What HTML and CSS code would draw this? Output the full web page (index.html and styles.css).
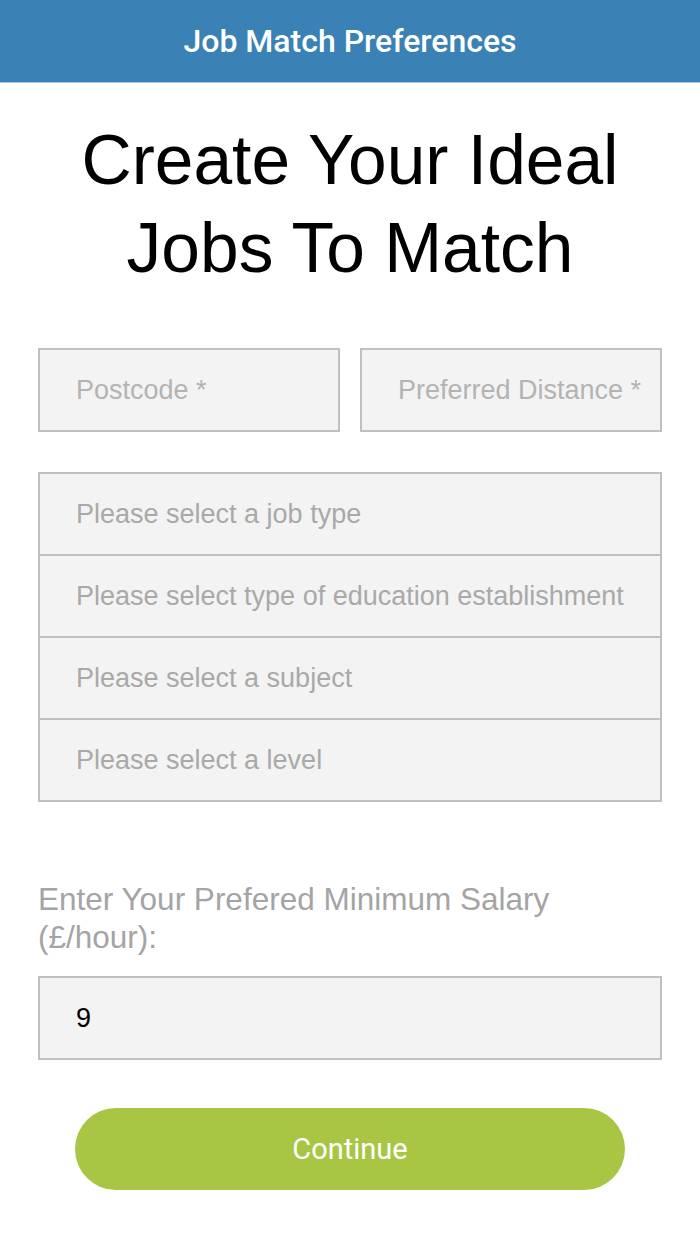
FILE: index.html
```html
<!DOCTYPE html>
<html lang="en">
<head>
    <meta charset="UTF-8">
    <meta name="viewport" content="width=device-width, initial-scale=1.0">
    <title>Job Match Preferences</title>
    <link rel="stylesheet" href="styles.css">
</head>
<body>
    <header class="topbar">Job Match Preferences</header>
    <main class="page">
        <h1 class="title">Create Your Ideal Jobs To Match</h1>
        <div class="row">
            <input class="field" type="text" placeholder="Postcode *">
            <input class="field" type="text" placeholder="Preferred Distance *">
        </div>
        <div class="group">
            <div class="option">Please select a job type</div>
            <div class="option">Please select type of education establishment</div>
            <div class="option">Please select a subject</div>
            <div class="option">Please select a level</div>
        </div>
        <label class="salary-label" for="salary">Enter Your Prefered Minimum Salary (£/hour):</label>
        <input class="field salary" id="salary" type="text" value="9">
        <button class="continue">Continue</button>
    </main>
</body>
</html>
```

FILE: styles.css
```css
body {
    margin: 0;
    font-family: "Liberation Sans", Arial, sans-serif;
    background: #fff;
}
.topbar {
    height: 82px;
    line-height: 82px;
    background-color: #3a81b5;
    border-bottom: 1px solid #a9c4d9;
    color: #fff;
    text-align: center;
    font-size: 32px;
    font-weight: 500;
    font-family: Roboto, "Liberation Sans", sans-serif;
}
.page {
    padding: 0 38px;
    display: flex;
    flex-direction: column;
}
.title {
    margin: 33px 0 0;
    font-size: 69.5px;
    font-weight: normal;
    line-height: 88px;
    text-align: center;
    color: #000;
}
.row {
    display: flex;
    gap: 20px;
    margin-top: 56px;
}
.field {
    box-sizing: border-box;
    height: 84px;
    width: 100%;
    min-width: 0;
    background: #f3f3f3;
    border: 2px solid #c0c0c0;
    padding: 0 0 0 36px;
    font-family: "Liberation Sans", Arial, sans-serif;
    font-size: 27px;
    color: #000;
    outline: none;
}
.field::placeholder {
    color: #b3b3b3;
}
.group {
    margin-top: 40px;
    border: 2px solid #c0c0c0;
    background: #f3f3f3;
}
.option {
    height: 80px;
    line-height: 80px;
    padding-left: 36px;
    font-size: 27px;
    color: #a9a9a9;
    border-top: 2px solid #c0c0c0;
}
.option:first-child {
    border-top: none;
}
.salary-label {
    margin-top: 78px;
    font-size: 31.5px;
    line-height: 38px;
    color: #a4a4a4;
}
.salary {
    margin-top: 20px;
}
.continue {
    margin: 48px 37px 0;
    height: 82px;
    border: none;
    border-radius: 41px;
    background-color: #a8c644;
    color: #fff;
    font-size: 29px;
    font-family: Roboto, "Liberation Sans", sans-serif;
    cursor: pointer;
}
```
